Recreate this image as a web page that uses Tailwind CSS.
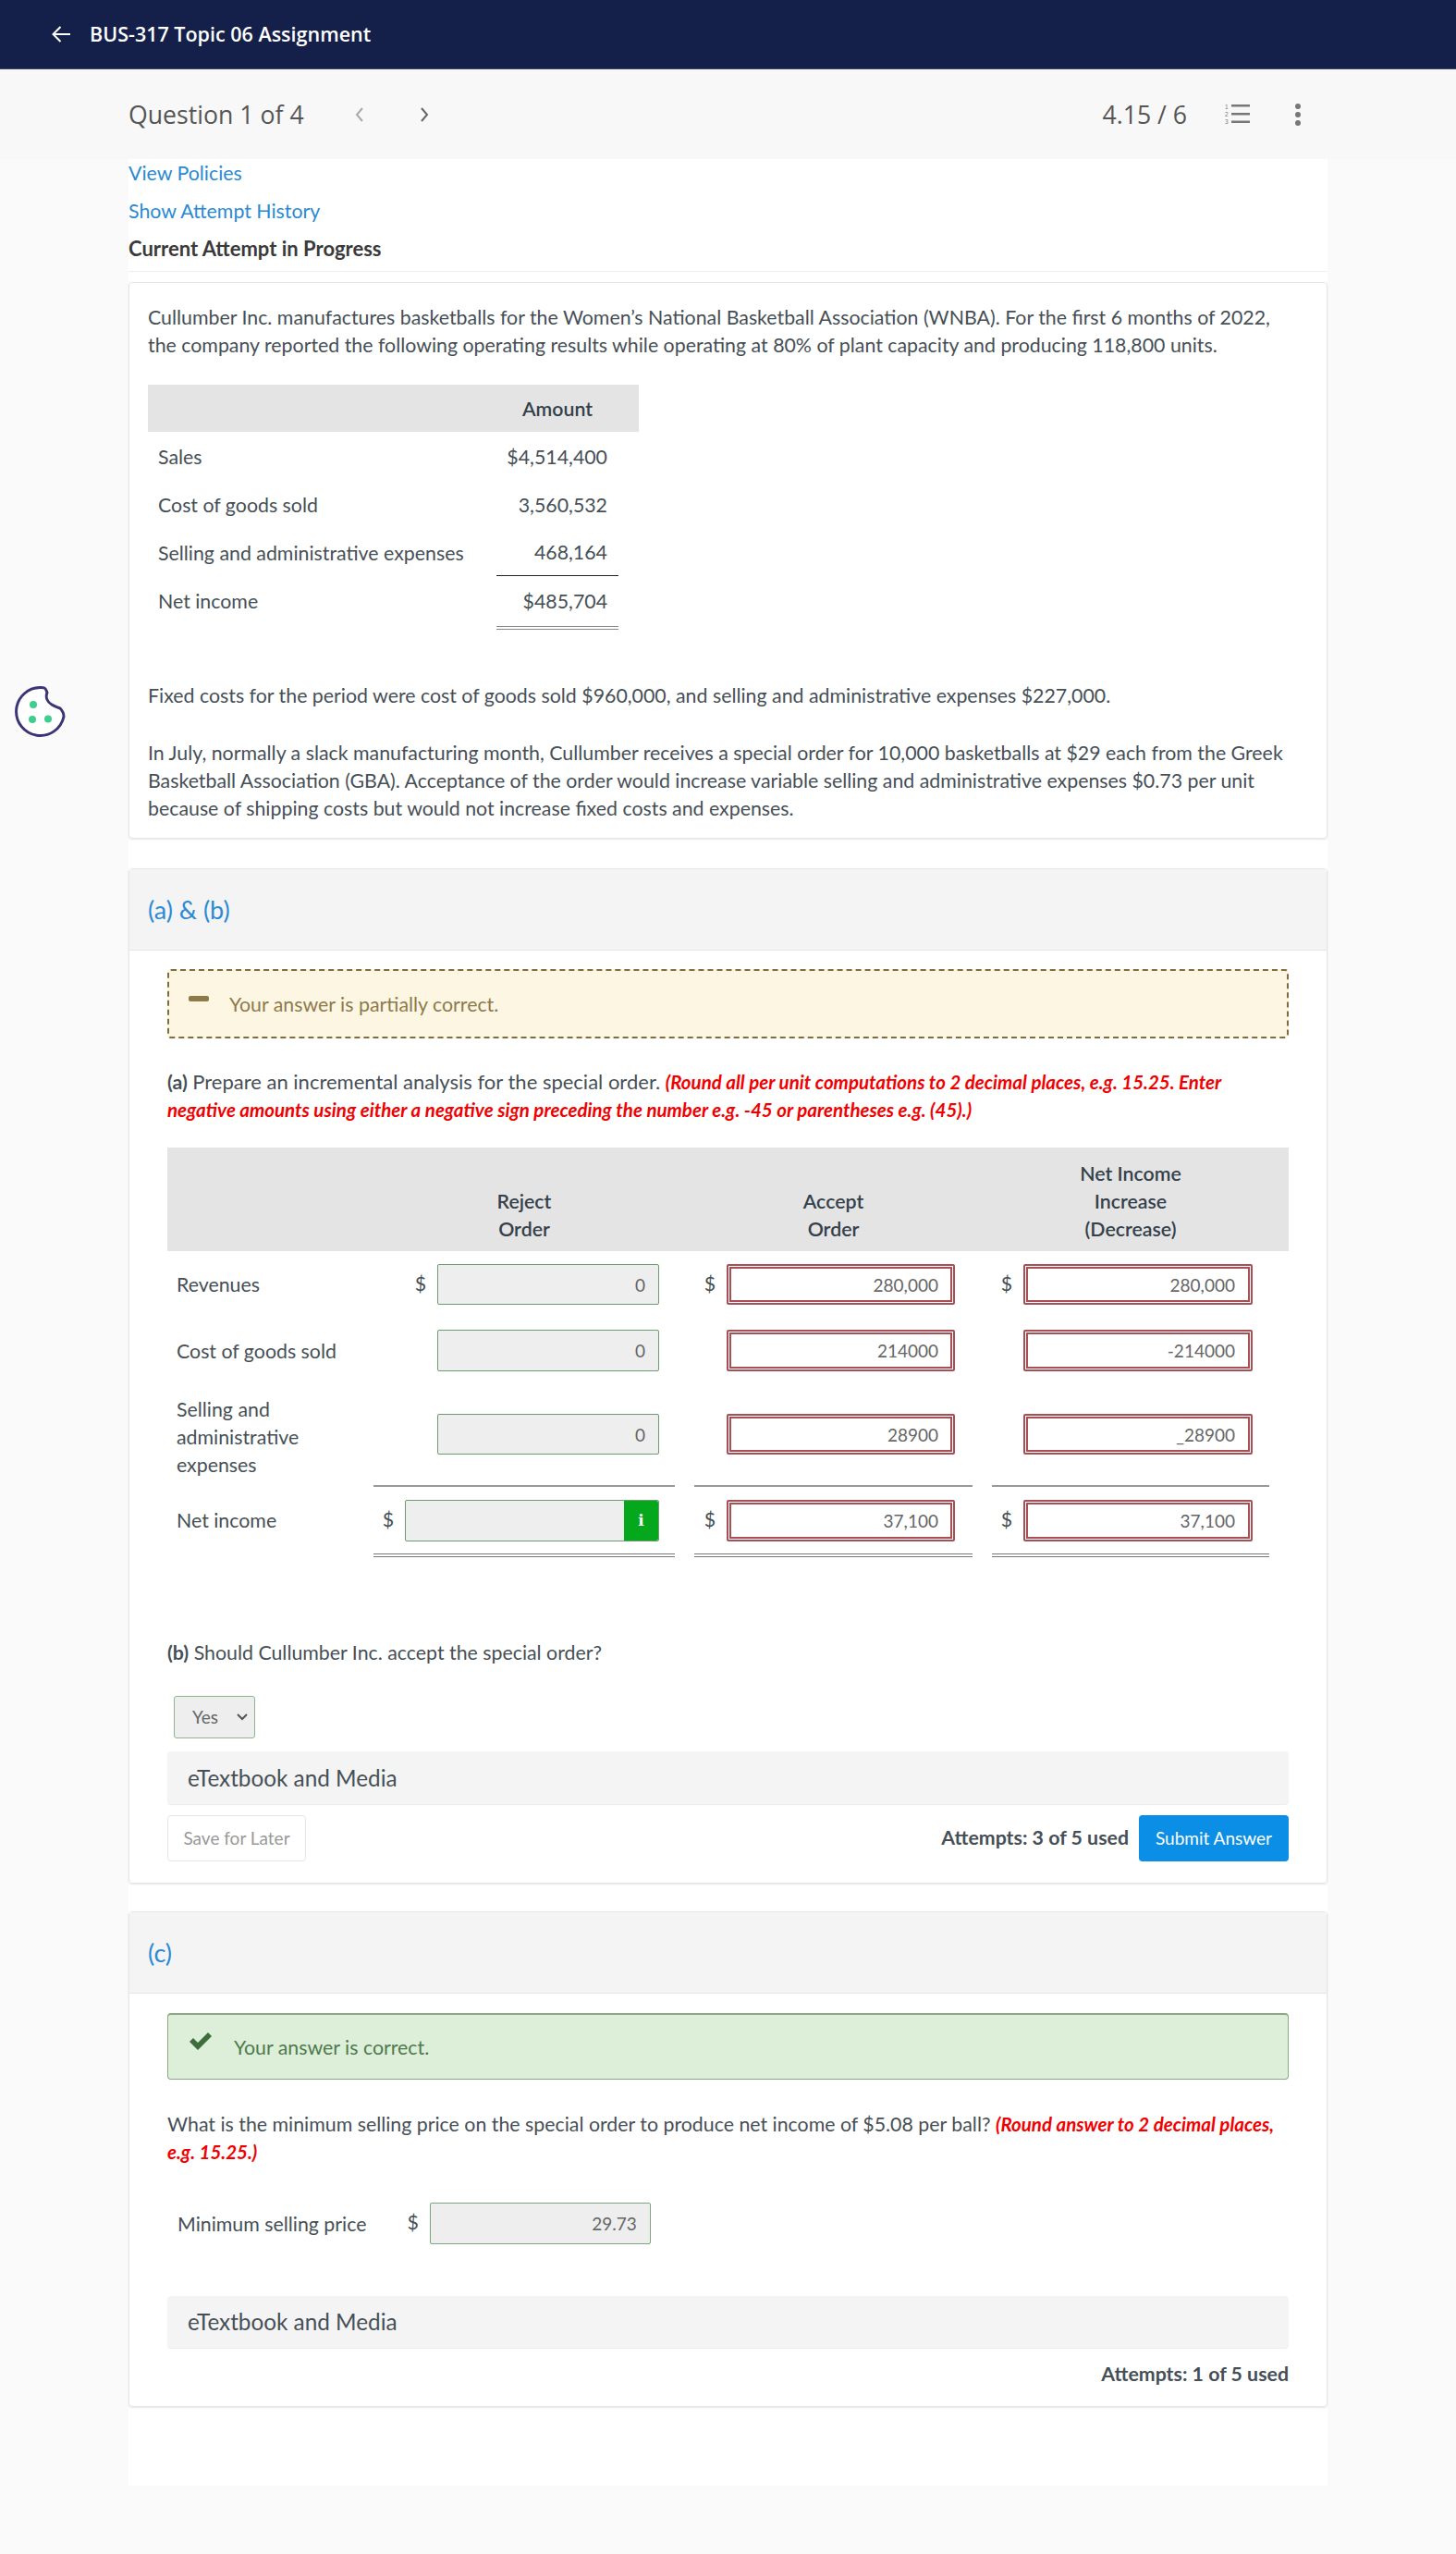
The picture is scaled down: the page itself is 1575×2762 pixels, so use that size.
<!DOCTYPE html>
<html lang="en">
<head>
    <meta charset="UTF-8">
    <title>BUS-317 Topic 06 Assignment</title>
    <script src="https://cdn.jsdelivr.net/npm/@tailwindcss/browser@4"></script>
</head>
<body class="bg-[#fafafa] font-['Lato',sans-serif] text-[21.33px] leading-[30px] text-[#464f56] relative">
    <!-- top bar -->
    <header class="h-[75px] bg-[#14204a] border-b border-[#3c4666] flex items-center pl-[55px] text-white">
        <svg class="w-[21px] h-[20px] mr-[21px]" viewBox="0 0 21 20" fill="none" stroke="white" stroke-width="2"><path d="M21 10H3M10.500 2l-8 8 8 8"/></svg>
        <span class="font-['Open_Sans',sans-serif] font-semibold text-[21.5px]">BUS-317 Topic 06 Assignment</span>
    </header>

    <!-- question nav -->
    <div class="h-[97px] bg-[#f8f8f8] pl-[139px] pr-[168px] flex items-center font-['Open_Sans',sans-serif]">
        <span class="text-[26.67px] text-[#555]">Question 1 of 4</span>
        <svg class="ml-[54px] w-[12px] h-[18px]" viewBox="0 0 12 18" fill="none" stroke="#aaa" stroke-width="2"><path d="M9 2L3 9l6 7"/></svg>
        <svg class="ml-[58px] w-[12px] h-[18px]" viewBox="0 0 12 18" fill="none" stroke="#666" stroke-width="2"><path d="M3 2l6 7-6 7"/></svg>
        <span class="ml-auto text-[26.67px] text-[#555]">4.15 / 6</span>
        <svg class="ml-[41px] w-[27px] h-[22px]" viewBox="0 0 27 22" fill="#777">
            <rect x="7" y="0" width="20" height="2.500"/><rect x="7" y="9" width="20" height="2.500"/><rect x="7" y="17.500" width="20" height="2.500"/>
            <text x="0" y="5" font-size="6.500" font-family="Liberation Sans">1</text><text x="0" y="13" font-size="6.500" font-family="Liberation Sans">2</text><text x="0" y="21" font-size="6.500" font-family="Liberation Sans">3</text>
        </svg>
        <div class="ml-[49px] flex flex-col gap-[3px]">
            <span class="w-[6px] h-[6px] rounded-full bg-[#777]"></span>
            <span class="w-[6px] h-[6px] rounded-full bg-[#777]"></span>
            <span class="w-[6px] h-[6px] rounded-full bg-[#777]"></span>
        </div>
    </div>

    <!-- cookie button -->
    <svg class="absolute left-[16px] top-[742px] w-[56px] h-[56px]" viewBox="0 0 56 56" fill="white" stroke="#3b3578" stroke-width="3">
        <path d="M32 2C34 3 34 5 35 7C33 12 35 17 40 20C43 22 46 23 49 24C52 27 53 30 53 33A26 26 0 1 1 28 1.500C30 1.500 31 1.500 32 2Z"/>
        <circle cx="20" cy="20" r="4" fill="#3ecf8e" stroke="none"/>
        <circle cx="19" cy="36" r="4" fill="#3ecf8e" stroke="none"/>
        <circle cx="36" cy="35.500" r="4" fill="#3ecf8e" stroke="none"/>
    </svg>

    <main class="w-[1297px] ml-[139px] bg-white h-[2516px]">
        <div class="h-[122px] border-b border-[#eee]">
            <a class="block text-[#2a8ad4] h-[41px]">View Policies</a>
            <a class="block text-[#2a8ad4] h-[41px]">Show Attempt History</a>
            <div class="font-bold text-[22px] text-[#3a3a3a]">Current Attempt in Progress</div>
        </div>

        <!-- problem text -->
        <section class="mt-[11px] h-[602px] border border-[#e6e6e6] rounded-[4px] shadow-[0_1px_2px_rgba(0,0,0,0.1)] px-[20px] pt-[22px]">
            <p class="pr-[20px]">Cullumber Inc. manufactures basketballs for the Women’s National Basketball Association (WNBA). For the first 6 months of 2022, the company reported the following operating results while operating at 80% of plant capacity and producing 118,800 units.</p>
            <div class="w-[531px] mt-[28px]">
                <div class="h-[51px] bg-[#e4e4e4] font-semibold text-[#34404a] grid grid-cols-[377px_132px] items-center"><span></span><span class="text-center">Amount</span></div>
                <div class="grid grid-cols-[366px_132px] h-[53px] pl-[11px]"><span class="flex items-center">Sales</span><span class="flex items-center justify-end pr-[12px]">$4,514,400</span></div>
                <div class="grid grid-cols-[366px_132px] h-[52px] pl-[11px]"><span class="flex items-center">Cost of goods sold</span><span class="flex items-center justify-end pr-[12px]">3,560,532</span></div>
                <div class="grid grid-cols-[366px_132px] h-[51px] pl-[11px]"><span class="flex items-center">Selling and administrative expenses</span><span class="flex items-center justify-end pr-[12px] border-b border-[#222]">468,164</span></div>
                <div class="grid grid-cols-[366px_132px] h-[58px] pl-[11px]"><span class="flex items-center pb-[4px]">Net income</span><span class="flex items-center justify-end pr-[12px] border-b-[4px] border-double border-[#888]">$485,704</span></div>
            </div>
            <p class="mt-[56px]">Fixed costs for the period were cost of goods sold $960,000, and selling and administrative expenses $227,000.</p>
            <p class="mt-[32px]">In July, normally a slack manufacturing month, Cullumber receives a special order for 10,000 basketballs at $29 each from the Greek Basketball Association (GBA). Acceptance of the order would increase variable selling and administrative expenses $0.73 per unit because of shipping costs but would not increase fixed costs and expenses.</p>
        </section>

        <!-- part a and b -->
        <section class="mt-[32px] h-[1098px] border border-[#e6e6e6] rounded-[4px] shadow-[0_1px_2px_rgba(0,0,0,0.1)]">
            <div class="h-[88px] bg-[#f4f4f4] border-b border-[#e6e6e6] flex items-center pl-[20px] text-[27px] text-[#2a8ad4]">(a) &amp; (b)</div>
            <div class="px-[41px]">
                <div class="mt-[20px] h-[75px] bg-[#fdf6e3] border-2 border-dashed border-[#806c3c] rounded-[4px] flex items-center pl-[21px] text-[#8d7a4b]">
                    <span class="w-[22px] h-[6px] rounded-[2px] bg-[#8d7a4b] -mt-[11px]"></span>
                    <span class="ml-[22px]">Your answer is partially correct.</span>
                </div>
                <p class="mt-[32px]"><b>(a)</b> <span class="text-[22px]">Prepare an incremental analysis for the special order.</span> <b class="italic text-[20.5px] text-[#f00000]">(Round all per unit computations to 2 decimal places, e.g. 15.25. Enter negative amounts using either a negative sign preceding the number e.g. -45 or parentheses e.g. (45).)</b></p>

                <!-- analysis table -->
                <div class="mt-[26px]">
                    <div class="h-[112px] bg-[#e4e4e4] font-semibold text-[#34404a] grid grid-cols-[202px_326px_301px_300px] gap-x-[21px] items-end pb-[9px] text-center">
                        <span></span>
                        <span>Reject<br>Order</span>
                        <span>Accept<br>Order</span>
                        <span>Net Income<br>Increase<br>(Decrease)</span>
                    </div>
                    <div class="grid grid-cols-[202px_326px_301px_300px] gap-x-[21px] grid-rows-[72px_71px_112px_76px]">
                        <div class="flex items-center pl-[10px]">Revenues</div>
                        <div class="flex items-center justify-end gap-3 pr-[17px]"><span class="-mt-[3px]">$</span><input readonly value="0" class="w-[240px] h-[44px] bg-[#eee] border border-[#6f9c6f] rounded-[2px] text-right pr-[14px] text-[19px] text-[#666]"></div>
                        <div class="flex items-center justify-end gap-3 pr-[19px]"><span class="-mt-[3px]">$</span><input readonly value="280,000" class="w-[247px] h-[44px] bg-white border-[5px] border-double border-[#a84f55] rounded-[2px] text-right pr-[13px] text-[19px] text-[#666]"></div>
                        <div class="flex items-center justify-end gap-3 pr-[18px]"><span class="-mt-[3px]">$</span><input readonly value="280,000" class="w-[248px] h-[44px] bg-white border-[5px] border-double border-[#a84f55] rounded-[2px] text-right pr-[14px] text-[19px] text-[#666]"></div>

                        <div class="flex items-center pl-[10px]">Cost of goods sold</div>
                        <div class="flex items-center justify-end pr-[17px]"><input readonly value="0" class="w-[240px] h-[45px] bg-[#eee] border border-[#6f9c6f] rounded-[2px] text-right pr-[14px] text-[19px] text-[#666]"></div>
                        <div class="flex items-center justify-end pr-[19px]"><input readonly value="214000" class="w-[247px] h-[45px] bg-white border-[5px] border-double border-[#a84f55] rounded-[2px] text-right pr-[13px] text-[19px] text-[#666]"></div>
                        <div class="flex items-center justify-end pr-[18px]"><input readonly value="-214000" class="w-[248px] h-[45px] bg-white border-[5px] border-double border-[#a84f55] rounded-[2px] text-right pr-[14px] text-[19px] text-[#666]"></div>

                        <div class="pl-[10px] pt-[13px] pr-[40px]">Selling and administrative expenses</div>
                        <div class="flex items-center justify-end pr-[17px] border-b-2 border-[#999]"><input readonly value="0" class="w-[240px] h-[44px] bg-[#eee] border border-[#6f9c6f] rounded-[2px] text-right pr-[14px] text-[19px] text-[#666]"></div>
                        <div class="flex items-center justify-end pr-[19px] border-b-2 border-[#999]"><input readonly value="28900" class="w-[247px] h-[44px] bg-white border-[5px] border-double border-[#a84f55] rounded-[2px] text-right pr-[13px] text-[19px] text-[#666]"></div>
                        <div class="flex items-center justify-end pr-[18px] border-b-2 border-[#999]"><input readonly value="_28900" class="w-[248px] h-[44px] bg-white border-[5px] border-double border-[#a84f55] rounded-[2px] text-right pr-[14px] text-[19px] text-[#666]"></div>

                        <div class="flex items-center pl-[10px] pb-[4px]">Net income</div>
                        <div class="flex items-center justify-end gap-3 pr-[17px] border-b-[4px] border-double border-[#777]">
                            <span class="-mt-[3px]">$</span>
                            <div class="w-[275px] h-[45px] bg-[#eee] border border-[#6f9c6f] rounded-[2px] flex justify-end">
                                <span class="w-[37px] bg-[#05a81c] rounded-r-[2px] flex items-center justify-center text-white font-bold text-[17px] font-['DejaVu_Serif',serif]">i</span>
                            </div>
                        </div>
                        <div class="flex items-center justify-end gap-3 pr-[19px] border-b-[4px] border-double border-[#777]"><span class="-mt-[3px]">$</span><input readonly value="37,100" class="w-[247px] h-[45px] bg-white border-[5px] border-double border-[#a84f55] rounded-[2px] text-right pr-[13px] text-[19px] text-[#666]"></div>
                        <div class="flex items-center justify-end gap-3 pr-[18px] border-b-[4px] border-double border-[#777]"><span class="-mt-[3px]">$</span><input readonly value="37,100" class="w-[248px] h-[45px] bg-white border-[5px] border-double border-[#a84f55] rounded-[2px] text-right pr-[14px] text-[19px] text-[#666]"></div>
                    </div>
                </div>

                <p class="mt-[88px]"><b>(b)</b> Should Cullumber Inc. accept the special order?</p>
                <div class="ml-[7px] mt-[32px] w-[88px] h-[46px] bg-[#eee] border border-[#8fb58f] rounded-[3px] flex items-center pl-[19px] text-[19px] text-[#666] relative">
                    Yes
                    <svg class="absolute right-[7px] top-[17px] w-[12px] h-[10px]" viewBox="0 0 12 10" fill="none" stroke="#555" stroke-width="2"><path d="M1 2l5 5 5-5"/></svg>
                </div>
                <div class="mt-[14px] h-[57px] bg-[#f4f4f4] rounded-[4px] shadow-[0_1px_1px_rgba(0,0,0,0.08)] flex items-center pl-[22px] text-[24.3px]">eTextbook and Media</div>
                <div class="mt-[12px] flex items-center">
                    <div class="w-[150px] h-[50px] bg-white border border-[#e6e6e6] rounded-[4px] flex items-center justify-center text-[19px] text-[#999]">Save for Later</div>
                    <span class="ml-auto font-bold -mt-[3px]">Attempts: 3 of 5 used</span>
                    <div class="ml-[11px] w-[162px] h-[50px] bg-[#0a8ee6] rounded-[4px] flex items-center justify-center text-[19px] text-white">Submit Answer</div>
                </div>
            </div>
        </section>

        <!-- part c -->
        <section class="mt-[30px] h-[536px] border border-[#e6e6e6] rounded-[4px] shadow-[0_1px_2px_rgba(0,0,0,0.1)]">
            <div class="h-[88px] bg-[#f4f4f4] border-b border-[#e6e6e6] flex items-center pl-[20px] text-[27px] text-[#2a8ad4]">(c)</div>
            <div class="px-[41px]">
                <div class="mt-[21px] h-[72px] bg-[#deefd9] border border-[#8aa884] border-t-2 rounded-[4px] flex items-center pl-[22px] text-[#4d7a4d]">
                    <svg class="w-[26px] h-[22px] -mt-[12px]" viewBox="0 0 26 22" fill="#3c6e3c"><path d="M1 11l4-4 5 5L21 1l4 4-15 15z"/></svg>
                    <span class="ml-[23px]">Your answer is correct.</span>
                </div>
                <p class="mt-[33px]">What is the minimum selling price on the special order to produce net income of $5.08 per ball? <b class="italic text-[20.5px] text-[#f00000]">(Round answer to 2 decimal places, e.g. 15.25.)</b></p>
                <div class="mt-[40px] flex items-center pl-[11px]">
                    <span>Minimum selling price</span>
                    <span class="ml-[44px] -mt-[3px]">$</span>
                    <input readonly value="29.73" class="ml-[12px] w-[239px] h-[45px] bg-[#eee] border border-[#7fa67f] rounded-[2px] text-right pr-[14px] text-[19px] text-[#666]">
                </div>
                <div class="mt-[56px] h-[56px] bg-[#f4f4f4] rounded-[4px] shadow-[0_1px_1px_rgba(0,0,0,0.08)] flex items-center pl-[22px] text-[24.3px]">eTextbook and Media</div>
                <div class="mt-[13px] text-right font-bold">Attempts: 1 of 5 used</div>
            </div>
        </section>
    </main>
</body>
</html>
